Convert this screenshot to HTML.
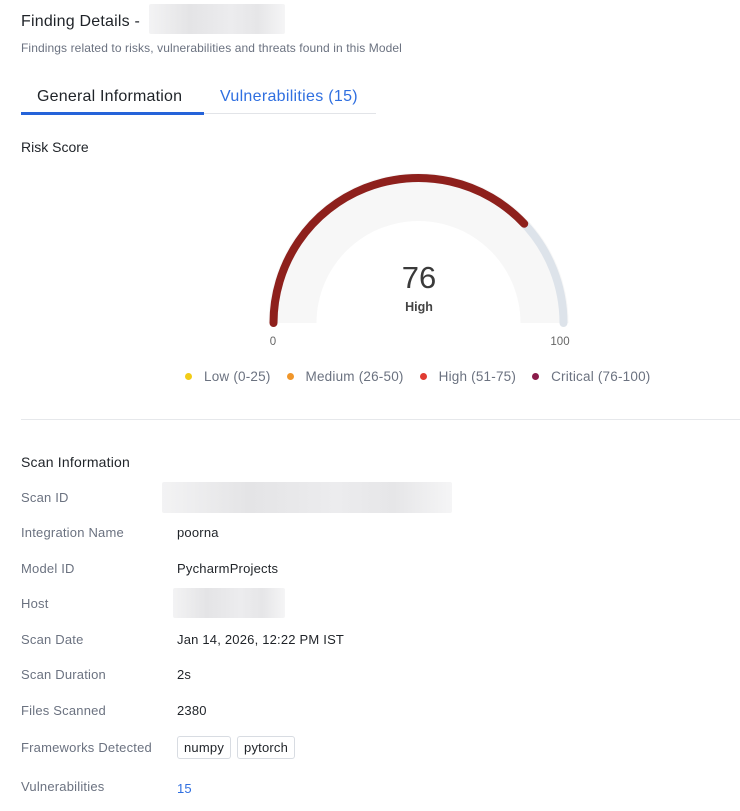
<!DOCTYPE html>
<html><head><meta charset="utf-8"><style>
*{margin:0;padding:0;box-sizing:border-box}
body{width:740px;height:811px;background:#fff;font-family:"Liberation Sans",sans-serif;color:#1f2328;position:relative;overflow:hidden}
.abs{position:absolute;white-space:nowrap}
.lbl{color:#6b7280;font-size:13px;letter-spacing:0.2px}
.val{color:#1f2328;font-size:13px;letter-spacing:0.2px}
.blur{position:absolute;background:linear-gradient(90deg,#f3f3f4,#e4e4e6 30%,#ececee 60%,#e6e6e8 80%,#f5f5f6);border-radius:2px}
.tag{display:inline-block;border:1px solid #d8dce2;border-radius:3px;padding:3px 6px;font-size:13px;margin-right:6px;letter-spacing:0.2px}
.dot{display:inline-block;width:7px;height:7px;border-radius:50%;margin-right:12px;vertical-align:1px}
.sp{display:inline-block;width:16px}
</style></head><body>
<div class="abs" style="left:21px;top:13px;font-size:16px;letter-spacing:0.2px">Finding Details -</div>
<div class="blur" style="left:149px;top:4px;width:136px;height:30px"></div>
<div class="abs" style="left:21px;top:41px;font-size:12px;color:#6b7280;letter-spacing:0.1px">Findings related to risks, vulnerabilities and threats found in this Model</div>
<div class="abs" style="left:21px;top:113px;width:355px;height:1px;background:#e2e4e8"></div>
<div class="abs" style="left:21px;top:112px;width:183px;height:3px;background:#2563d9"></div>
<div class="abs" style="left:37px;top:88px;font-size:16px;letter-spacing:0.2px">General Information</div>
<div class="abs" style="left:220px;top:88px;font-size:16px;color:#2f6fe0;letter-spacing:0.3px">Vulnerabilities (15)</div>
<div class="abs" style="left:21px;top:139px;font-size:14px">Risk Score</div>
<svg class="abs" style="left:0;top:0" width="740" height="400">
<path d="M268.5 323 A150 150 0 0 1 568.5 323 L520.5 323 A102 102 0 0 0 316.5 323 Z" fill="#f7f7f7"/>
<path d="M273.5 323 A145 145 0 0 1 563.5 323" fill="none" stroke="#dde3ea" stroke-width="8" stroke-linecap="round"/>
<path d="M273.5 323 A145 145 0 0 1 524.2 223.7" fill="none" stroke="#8e201c" stroke-width="8" stroke-linecap="round"/>
<text x="419" y="288" text-anchor="middle" font-size="31" fill="#3a3a3a" font-family="Liberation Sans">76</text>
<text x="419" y="311" text-anchor="middle" font-size="12.5" fill="#444" font-weight="bold" font-family="Liberation Sans">High</text>
<text x="273" y="345" text-anchor="middle" font-size="11.5" fill="#666" font-family="Liberation Sans">0</text>
<text x="560" y="345" text-anchor="middle" font-size="11.5" fill="#666" font-family="Liberation Sans">100</text>
</svg>
<div class="abs" style="left:185px;top:369px;font-size:13.5px;color:#6b7280;letter-spacing:0.2px">
<span class="dot" style="background:#f2cc17"></span>Low (0-25)<span class="sp"></span><span class="dot" style="background:#f0962a"></span>Medium (26-50)<span class="sp"></span><span class="dot" style="background:#e03b32"></span>High (51-75)<span class="sp"></span><span class="dot" style="background:#8a1b4a"></span>Critical (76-100)</div>
<div class="abs" style="left:21px;top:419px;width:719px;height:1px;background:#e6e8eb"></div>
<div class="abs" style="left:21px;top:454px;font-size:14px;letter-spacing:0.2px">Scan Information</div>
<div class="abs lbl" style="left:21px;top:490px">Scan ID</div>
<div class="blur" style="left:162px;top:482px;width:290px;height:31px"></div>
<div class="abs lbl" style="left:21px;top:525px">Integration Name</div><div class="abs val" style="left:177px;top:525px">poorna</div>
<div class="abs lbl" style="left:21px;top:561px">Model ID</div><div class="abs val" style="left:177px;top:561px">PycharmProjects</div>
<div class="abs lbl" style="left:21px;top:596px">Host</div>
<div class="blur" style="left:173px;top:588px;width:112px;height:30px"></div>
<div class="abs lbl" style="left:21px;top:632px">Scan Date</div><div class="abs val" style="left:177px;top:632px">Jan 14, 2026, 12:22 PM IST</div>
<div class="abs lbl" style="left:21px;top:667px">Scan Duration</div><div class="abs val" style="left:177px;top:667px">2s</div>
<div class="abs lbl" style="left:21px;top:703px">Files Scanned</div><div class="abs val" style="left:177px;top:703px">2380</div>
<div class="abs lbl" style="left:21px;top:740px">Frameworks Detected</div>
<div class="abs" style="left:177px;top:736px"><span class="tag">numpy</span><span class="tag">pytorch</span></div>
<div class="abs lbl" style="left:21px;top:779px">Vulnerabilities</div><div class="abs val" style="left:177px;top:781px;color:#2f6fe0">15</div>
</body></html>
